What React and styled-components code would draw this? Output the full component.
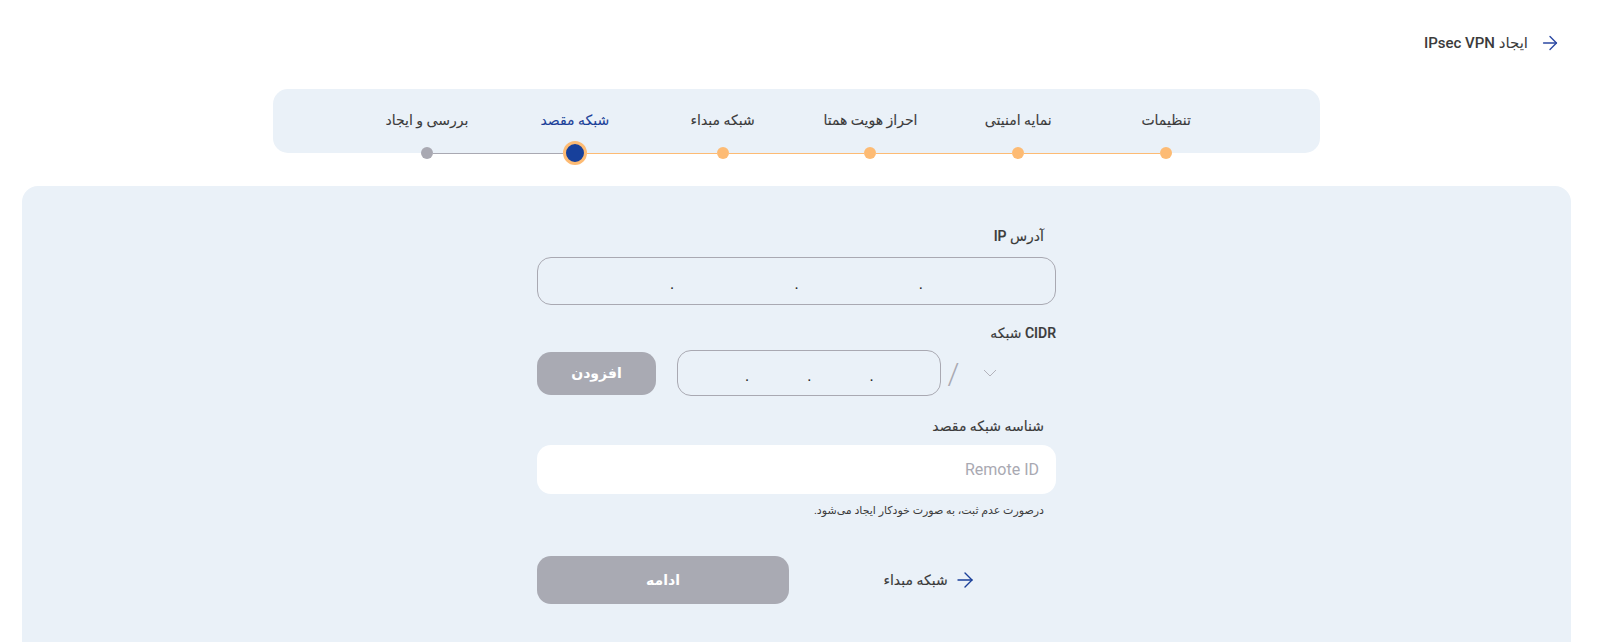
import React from "react";
import styled, { createGlobalStyle } from "styled-components";
import { ArrowRight } from "lucide-react";

const GlobalStyle = createGlobalStyle`
	body {
		margin: 0;
		background: #ffffff;
		font-family: Roboto, "DejaVu Sans", sans-serif;
		color: #3b3b3b;
	}
	* {
		box-sizing: border-box;
	}
`;

const Page = styled.div`
	padding: 0 37px 0 22px;
`;

const Header = styled.div`
	display: flex;
	align-items: center;
	gap: 11px;
	height: 24px;
	margin-top: 31px;
	padding-right: 10px;
	color: #2b48a3;
`;

const Title = styled.span`
	font-size: 15px;
	font-weight: 500;
	color: #3b3b3b;
`;

const Stepper = styled.div`
	width: 1047px;
	margin: 34px auto 0;
	padding: 21px 80px 0;
	background: #eaf1f8;
	border-radius: 15px;
	display: grid;
	grid-template-columns: repeat(6, 1fr);
`;

const Step = styled.div`
	display: flex;
	flex-direction: column;
	align-items: center;
`;

const StepLabel = styled.span`
	font-size: 14px;
	line-height: 20px;
	white-space: nowrap;
	color: ${(p) => (p.$active ? "#1a3f99" : "#3b3b3b")};
	-webkit-text-stroke: 0.1px ${(p) => (p.$active ? "#1a3f99" : "#3b3b3b")};
`;

const DotRow = styled.div`
	width: 100%;
	height: 24px;
	margin-top: 11px;
	margin-bottom: -12px;
	display: flex;
	align-items: center;
`;

const Track = styled.span`
	flex: 1;
	height: 1px;
	background: ${(p) => p.$color};
`;

const Dot = styled.span`
	flex: none;
	width: ${(p) => (p.$current ? 24 : 12)}px;
	height: ${(p) => (p.$current ? 24 : 12)}px;
	border-radius: 50%;
	background: ${(p) =>
		p.$current ? "#17409b" : p.$done ? "#fdbb74" : "#a9a9b2"};
	border: ${(p) => (p.$current ? "3px solid #fdbb74" : "none")};
`;

const Panel = styled.div`
	margin-top: 33px;
	background: #eaf1f8;
	border-radius: 16px 16px 0 0;
	padding: 40px 0 60px;
`;

const Form = styled.div`
	width: 519px;
	margin: 0 auto;
	display: flex;
	flex-direction: column;
`;

const Label = styled.label`
	font-size: 14px;
	line-height: 20px;
	font-weight: 500;
	-webkit-text-stroke: 0.15px #3b3b3b;
	padding-right: ${(p) => p.$inset || 0}px;
	margin-top: ${(p) => p.$top || 0}px;
	margin-bottom: ${(p) => p.$bottom || 0}px;
`;

const IpBox = styled.div`
	direction: ltr;
	display: flex;
	align-items: center;
	flex: none;
	width: ${(p) => p.$width}px;
	height: ${(p) => p.$height}px;
	padding: 0 ${(p) => p.$pad}px;
	border: 1px solid #a9a9b2;
	border-radius: 14px;
`;

const Segment = styled.input`
	width: ${(p) => p.$width}px;
	height: 100%;
	border: none;
	background: transparent;
	outline: none;
	text-align: center;
	font-family: Roboto, sans-serif;
	font-size: 15px;
	color: #3b3b3b;
`;

const Sep = styled.span`
	width: 5px;
	text-align: center;
	font-size: 16px;
	line-height: 20px;
	padding-top: 6px;
	color: #222;
`;

const CidrRow = styled.div`
	display: flex;
	align-items: center;
	height: 46px;
`;

const MaskSelect = styled.div`
	width: 86px;
	height: 100%;
	display: flex;
	align-items: center;
	justify-content: flex-end;
	padding-left: 13px;
	color: #b3b3bb;
`;

const Slash = styled.span`
	width: 29px;
	text-align: center;
	font-size: 30px;
	font-weight: 300;
	color: #a9a9b2;
	padding-right: 4px;
`;

const GrayButton = styled.button`
	width: ${(p) => p.$width || "auto"};
	height: ${(p) => p.$height}px;
	margin-right: ${(p) => (p.$push ? "auto" : "0")};
	border: none;
	border-radius: 14px;
	background: #a9aab3;
	color: #ffffff;
	font-family: Roboto, "DejaVu Sans", sans-serif;
	font-size: 14px;
	font-weight: 700;
`;

const RemoteInput = styled.input`
	height: 49px;
	border: none;
	border-radius: 14px;
	background: #ffffff;
	padding: 0 17px;
	outline: none;
	font-family: Roboto, "DejaVu Sans", sans-serif;
	font-size: 16px;
	color: #3b3b3b;
	&::placeholder {
		color: #a9a9b2;
	}
`;

const Hint = styled.p`
	margin: 9px 0 0;
	padding-right: 12px;
	font-size: 11px;
	line-height: 16px;
`;

const Actions = styled.div`
	margin-top: 37px;
	display: grid;
	grid-template-columns: 1fr 1fr;
	gap: 15px;
`;

const BackLink = styled.a`
	display: flex;
	align-items: center;
	justify-content: center;
	gap: 5px;
	font-size: 14px;
	font-weight: 500;
	-webkit-text-stroke: 0.15px #3b3b3b;
	color: #3b3b3b;
	text-decoration: none;
	svg {
		color: #1a3f99;
	}
`;

const steps = [
	"تنظیمات",
	"نمایه امنیتی",
	"احراز هویت همتا",
	"شبکه مبداء",
	"شبکه مقصد",
	"بررسی و ایجاد",
];
const current = 4;

const IpField = ({ width, height, pad, seg }) => (
	<IpBox $width={width} $height={height} $pad={pad}>
		{[0, 1, 2, 3].map((i) => (
			<React.Fragment key={i}>
				{i > 0 && <Sep>.</Sep>}
				<Segment $width={seg} />
			</React.Fragment>
		))}
	</IpBox>
);

const App = () => {
	return (
		<Page dir="rtl">
			<GlobalStyle />
			<Header>
				<ArrowRight size={22} strokeWidth={1.5} />
				<Title>ایجاد IPsec VPN</Title>
			</Header>

			<Stepper>
				{steps.map((s, i) => (
					<Step key={s}>
						<StepLabel $active={i === current}>{s}</StepLabel>
						<DotRow>
							<Track
								$color={
									i === 0 ? "transparent" : i <= current ? "#fdbb74" : "#a9a9b2"
								}
							/>
							<Dot $current={i === current} $done={i < current} />
							<Track
								$color={
									i === steps.length - 1
										? "transparent"
										: i + 1 <= current
										? "#fdbb74"
										: "#a9a9b2"
								}
							/>
						</DotRow>
					</Step>
				))}
			</Stepper>

			<Panel>
				<Form>
					<Label $inset={12} $bottom={11}>
						آدرس IP
					</Label>
					<IpField width={519} height={48} pad={12} seg={120} />

					<Label $top={18} $bottom={7}>
						CIDR شبکه
					</Label>
					<CidrRow>
						<MaskSelect>
							<svg width="14" height="8" viewBox="0 0 14 8">
								<polyline
									points="1,1 7,7 13,1"
									fill="none"
									stroke="currentColor"
									strokeWidth="1"
								/>
							</svg>
						</MaskSelect>
						<Slash>/</Slash>
						<IpField width={264} height={46} pad={9} seg={58} />
						<GrayButton $width="119px" $height={43} $push>
							افزودن
						</GrayButton>
					</CidrRow>

					<Label $inset={12} $top={20} $bottom={9}>
						شناسه شبکه مقصد
					</Label>
					<RemoteInput placeholder="Remote ID" />
					<Hint>درصورت عدم ثبت، به صورت خودکار ایجاد می‌شود.</Hint>

					<Actions>
						<BackLink href="#">
							<ArrowRight size={24} strokeWidth={1.4} />
							شبکه مبداء
						</BackLink>
						<GrayButton $height={48}>ادامه</GrayButton>
					</Actions>
				</Form>
			</Panel>
		</Page>
	);
};

export default App;
